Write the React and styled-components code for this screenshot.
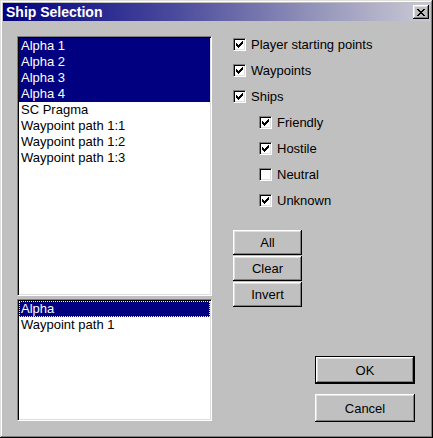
import React from 'react';
import styled, { createGlobalStyle } from 'styled-components';

const GlobalStyle = createGlobalStyle`
  html, body {
    margin: 0;
    padding: 0;
    background: #c0c0c0;
  }
`;

const Window = styled.div`
  width: 433px;
  height: 438px;
  box-sizing: border-box;
  padding: 3px;
  background: #c0c0c0;
  box-shadow: inset -1px -1px #000, inset 1px 1px #dfdfdf,
    inset -2px -2px #808080, inset 2px 2px #fff;
  display: flex;
  flex-direction: column;
  font-family: "Liberation Sans", Arial, sans-serif;
  font-size: 13px;
  color: #000;
`;

const TitleBar = styled.div`
  height: 18px;
  display: flex;
  align-items: center;
  justify-content: space-between;
  padding: 0 1px 0 3px;
  background: linear-gradient(90deg, #000080 0%, #4a4a9c 40%, #9898bc 75%, #cacad6 100%);
`;

const Title = styled.span`
  color: #fff;
  font-weight: bold;
  font-size: 14px;
  line-height: 18px;
`;

const Raised = styled.button`
  box-sizing: border-box;
  margin: 0;
  padding: 0;
  border: none;
  background: #c0c0c0;
  font-family: inherit;
  color: #000;
  box-shadow: inset -1px -1px #000, inset 1px 1px #fff,
    inset -2px -2px #808080, inset 2px 2px #dfdfdf;
  display: flex;
  align-items: center;
  justify-content: center;
`;

const CloseButton = styled(Raised)`
  width: 16px;
  height: 14px;
`;

const Body = styled.div`
  flex: 1;
  display: flex;
  padding: 15px 15px 0 14px;
`;

const LeftCol = styled.div`
  width: 195px;
  display: flex;
  flex-direction: column;
  gap: 3px;
`;

const ListBox = styled.div`
  box-sizing: border-box;
  height: ${(p) => p.$height}px;
  background: #fff;
  border: 1px solid;
  border-color: #808080 #fff #fff #808080;
  box-shadow: inset 1px 1px #000, inset -1px -1px #dfdfdf;
  padding: 1px;
  overflow: hidden;
`;

const Item = styled.div`
  height: 16px;
  line-height: 16px;
  padding-left: 2px;
  white-space: nowrap;
  background: ${(p) => (p.$selected ? '#000080' : 'transparent')};
  color: ${(p) => (p.$selected ? '#fff' : '#000')};
  outline: ${(p) => (p.$focused ? '1px dotted #ffff60' : 'none')};
  outline-offset: -1px;
`;

const RightCol = styled.div`
  flex: 1;
  margin-left: 21px;
  display: flex;
  flex-direction: column;
`;

const CheckList = styled.div`
  margin-top: 2px;
  display: flex;
  flex-direction: column;
  gap: 13px;
`;

const CheckRow = styled.label`
  display: flex;
  align-items: center;
  height: 13px;
  gap: 5px;
  margin-left: ${(p) => (p.$indent ? 26 : 0)}px;
  white-space: nowrap;
`;

const Box = styled.span`
  box-sizing: border-box;
  width: 13px;
  height: 13px;
  flex: none;
  background: #fff;
  border: 1px solid;
  border-color: #808080 #fff #fff #808080;
  box-shadow: inset 1px 1px #000, inset -1px -1px #dfdfdf;
  display: flex;
  align-items: center;
  justify-content: center;
`;

const ButtonStack = styled.div`
  margin-top: 23px;
  width: 69px;
  display: flex;
  flex-direction: column;
  gap: 1px;
`;

const SmallButton = styled(Raised)`
  height: 25px;
  font-size: 13px;
`;

const DialogButtons = styled.div`
  margin-top: 49px;
  align-self: flex-end;
  display: flex;
  flex-direction: column;
  gap: 10px;
`;

const DialogButton = styled(Raised)`
  width: 100px;
  height: 28px;
  font-size: 13px;
  ${(p) =>
    p.$default &&
    `box-shadow: inset 0 0 0 1px #000, inset -2px -2px #000, inset 2px 2px #fff,
      inset -3px -3px #808080, inset 3px 3px #dfdfdf;`}
`;

const Check = () => (
  <svg width="7" height="7" viewBox="0 0 7 7" shapeRendering="crispEdges">
    <path
      fill="#000"
      d="M6 0h1v1h-1z M5 1h2v1h-2z M0 2h1v1h-1z M4 2h3v1h-3z M0 3h2v1h-2z M3 3h3v1h-3z M0 4h5v1h-5z M1 5h3v1h-3z M2 6h1v1h-1z"
    />
  </svg>
);

const CloseGlyph = () => (
  <svg width="8" height="7" viewBox="0 0 8 7" shapeRendering="crispEdges">
    <path
      fill="#000"
      d="M0 0h2v1h-2z M6 0h2v1h-2z M1 1h2v1h-2z M5 1h2v1h-2z M2 2h4v1h-4z M3 3h2v1h-2z M2 4h4v1h-4z M1 5h2v1h-2z M5 5h2v1h-2z M0 6h2v1h-2z M6 6h2v1h-2z"
    />
  </svg>
);

const ships = [
  { name: 'Alpha 1', selected: true },
  { name: 'Alpha 2', selected: true },
  { name: 'Alpha 3', selected: true },
  { name: 'Alpha 4', selected: true },
  { name: 'SC Pragma' },
  { name: 'Waypoint path 1:1' },
  { name: 'Waypoint path 1:2' },
  { name: 'Waypoint path 1:3' },
];

const groups = [
  { name: 'Alpha', selected: true, focused: true },
  { name: 'Waypoint path 1' },
];

const filters = [
  { label: 'Player starting points', checked: true },
  { label: 'Waypoints', checked: true },
  { label: 'Ships', checked: true },
  { label: 'Friendly', checked: true, indent: true },
  { label: 'Hostile', checked: true, indent: true },
  { label: 'Neutral', checked: false, indent: true },
  { label: 'Unknown', checked: true, indent: true },
];

export default function App() {
  return (
    <>
      <GlobalStyle />
      <Window>
        <TitleBar>
          <Title>Ship Selection</Title>
          <CloseButton aria-label="Close">
            <CloseGlyph />
          </CloseButton>
        </TitleBar>
        <Body>
          <LeftCol>
            <ListBox $height={260}>
              {ships.map((s) => (
                <Item key={s.name} $selected={s.selected}>
                  {s.name}
                </Item>
              ))}
            </ListBox>
            <ListBox $height={122}>
              {groups.map((g) => (
                <Item key={g.name} $selected={g.selected} $focused={g.focused}>
                  {g.name}
                </Item>
              ))}
            </ListBox>
          </LeftCol>
          <RightCol>
            <CheckList>
              {filters.map((f) => (
                <CheckRow key={f.label} $indent={f.indent}>
                  <Box>{f.checked && <Check />}</Box>
                  {f.label}
                </CheckRow>
              ))}
            </CheckList>
            <ButtonStack>
              <SmallButton>All</SmallButton>
              <SmallButton>Clear</SmallButton>
              <SmallButton>Invert</SmallButton>
            </ButtonStack>
            <DialogButtons>
              <DialogButton $default>OK</DialogButton>
              <DialogButton>Cancel</DialogButton>
            </DialogButtons>
          </RightCol>
        </Body>
      </Window>
    </>
  );
}
